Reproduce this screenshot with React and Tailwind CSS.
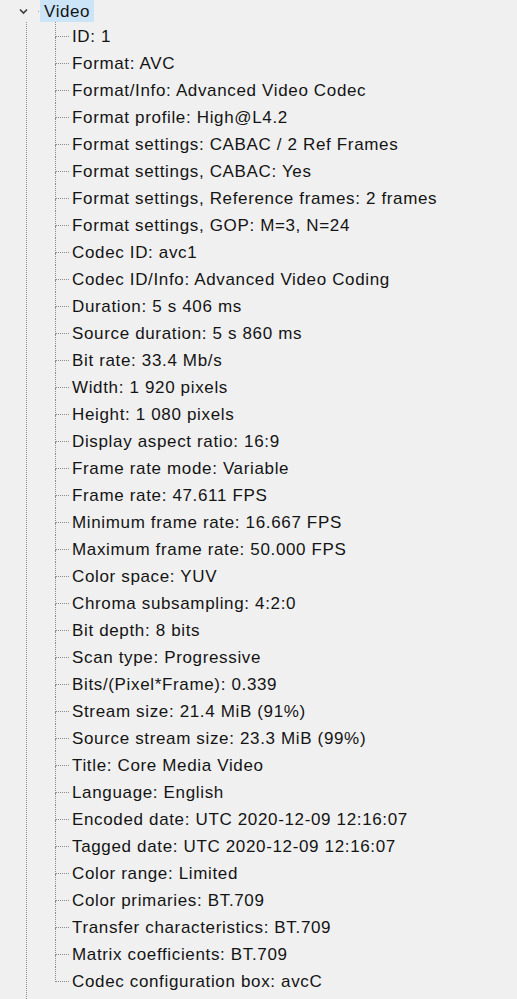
import React from "react";

const items = [
  "ID: 1",
  "Format: AVC",
  "Format/Info: Advanced Video Codec",
  "Format profile: High@L4.2",
  "Format settings: CABAC / 2 Ref Frames",
  "Format settings, CABAC: Yes",
  "Format settings, Reference frames: 2 frames",
  "Format settings, GOP: M=3, N=24",
  "Codec ID: avc1",
  "Codec ID/Info: Advanced Video Coding",
  "Duration: 5 s 406 ms",
  "Source duration: 5 s 860 ms",
  "Bit rate: 33.4 Mb/s",
  "Width: 1 920 pixels",
  "Height: 1 080 pixels",
  "Display aspect ratio: 16:9",
  "Frame rate mode: Variable",
  "Frame rate: 47.611 FPS",
  "Minimum frame rate: 16.667 FPS",
  "Maximum frame rate: 50.000 FPS",
  "Color space: YUV",
  "Chroma subsampling: 4:2:0",
  "Bit depth: 8 bits",
  "Scan type: Progressive",
  "Bits/(Pixel*Frame): 0.339",
  "Stream size: 21.4 MiB (91%)",
  "Source stream size: 23.3 MiB (99%)",
  "Title: Core Media Video",
  "Language: English",
  "Encoded date: UTC 2020-12-09 12:16:07",
  "Tagged date: UTC 2020-12-09 12:16:07",
  "Color range: Limited",
  "Color primaries: BT.709",
  "Transfer characteristics: BT.709",
  "Matrix coefficients: BT.709",
  "Codec configuration box: avcC",
];

export default function App() {
  return (
    <div
      className="w-[517px] h-[999px] overflow-hidden bg-[#f0f0f0] text-[#141414]"
      style={{ fontFamily: '"Liberation Sans", Arial, sans-serif' }}
    >
      <div className="flex items-center h-[22px]">
        <div className="w-[19px]" />
        <svg width="9" height="7" viewBox="0 0 9 7" className="mt-[1px]">
          <path d="M1 1.5 L4.5 5 L8 1.5" fill="none" stroke="#3a3a3a" strokeWidth="1.6" />
        </svg>
        <div className="w-[12px] flex items-center justify-end pr-[1px]">
          <div className="w-[1px] h-[1px] bg-[#a0a0a0]" />
        </div>
        <div className="h-[22px] bg-[#cce4f7] pl-[4px] pr-[4px] flex items-center text-[17px] leading-none tracking-[0.6px]">
          Video
        </div>
      </div>
      <div className="flex">
        <div className="ml-[26px] w-[29px] h-[977px] border-l border-dotted border-[#8c8c8c]" />
        <div className="flex flex-col">
          {items.map((t, i) => {
            const last = i === items.length - 1;
            return (
              <div key={i} className="flex h-[27px]">
                <div className="w-[14px] flex flex-col shrink-0">
                  <div className="h-[15px] border-l border-b border-dotted border-[#8c8c8c]" />
                  <div
                    className={
                      last
                        ? "flex-1"
                        : "flex-1 border-l border-dotted border-[#8c8c8c]"
                    }
                  />
                </div>
                <div className="pl-[3px] flex items-center text-[17px] leading-none tracking-[0.65px] whitespace-nowrap pt-[2px]">
                  {t}
                </div>
              </div>
            );
          })}
        </div>
      </div>
    </div>
  );
}
